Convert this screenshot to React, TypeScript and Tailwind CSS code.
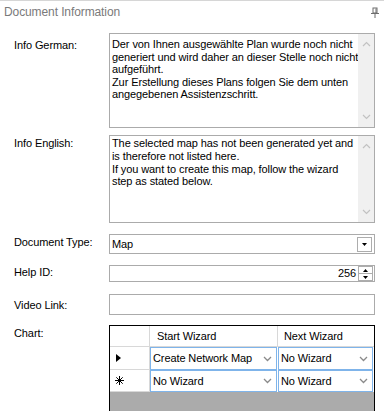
import React from "react";

const Chevron = () => (
  <svg width="9" height="6" viewBox="0 0 9 6" className="shrink-0">
    <polyline points="1,1 4.5,4.5 8,1" fill="none" stroke="#8a8a8a" strokeWidth="1.3" />
  </svg>
);

const ScrollStrip = () => (
  <div className="w-[16px] h-full shrink-0 bg-[#f0f0f0] flex flex-col items-center justify-between py-[7px]">
    <svg width="9" height="6" viewBox="0 0 9 6">
      <polyline points="1,5 4.5,1.5 8,5" fill="none" stroke="#c2c2c2" strokeWidth="1.2" />
    </svg>
    <svg width="9" height="6" viewBox="0 0 9 6">
      <polyline points="1,1 4.5,4.5 8,1" fill="none" stroke="#c2c2c2" strokeWidth="1.2" />
    </svg>
  </div>
);

const GridCombo = ({ text }: { text: string }) => (
  <div className="h-full w-full border border-[#7fb4ea] bg-white flex items-center justify-between pl-[2px] pr-[4px] text-black whitespace-nowrap">
    <span>{text}</span>
    <Chevron />
  </div>
);

export default function App() {
  return (
    <div className="w-[384px] h-[411px] bg-white border-t border-[#d6d6d6] overflow-hidden font-['Liberation_Sans',Arial,sans-serif] text-[11px] tracking-[-0.1px] leading-[13px] text-black">
      <div className="h-[22px] flex items-center justify-between pl-[4px] pr-[5px]">
        <span className="text-[12px] text-[#7a7a7a]">Document Information</span>
        <svg width="8" height="11" viewBox="0 0 8 11">
          <rect x="2" y="1" width="4" height="5" fill="none" stroke="#6d6d6d" strokeWidth="1" />
          <line x1="0" y1="6.5" x2="8" y2="6.5" stroke="#6d6d6d" strokeWidth="1" />
          <line x1="4" y1="7" x2="4" y2="11" stroke="#6d6d6d" strokeWidth="1" />
          <line x1="5" y1="1.5" x2="5" y2="6" stroke="#6d6d6d" strokeWidth="1" />
        </svg>
      </div>

      <div className="pl-[14px] mt-[10px] flex flex-col">
        {/* Info German */}
        <div className="flex">
          <div className="w-[95px] shrink-0 pt-[6px]">Info German:</div>
          <div className="w-[266px] h-[95px] shrink-0 border border-[#ababab] flex overflow-hidden">
            <div className="flex-1 pl-[2px] pt-[4px] leading-[12.6px] whitespace-nowrap overflow-hidden">
              Der von Ihnen ausgewählte Plan wurde noch nicht
              <br />
              generiert und wird daher an dieser Stelle noch nicht
              <br />
              aufgeführt.
              <br />
              Zur Erstellung dieses Plans folgen Sie dem unten
              <br />
              angegebenen Assistenzschritt.
            </div>
            <ScrollStrip />
          </div>
        </div>

        {/* Info English */}
        <div className="flex mt-[7px]">
          <div className="w-[95px] shrink-0 pt-[2px]">Info English:</div>
          <div className="w-[266px] h-[88px] shrink-0 border border-[#ababab] flex overflow-hidden">
            <div className="flex-1 pl-[2px] pt-[1px] leading-[12.8px] whitespace-nowrap overflow-hidden">
              The selected map has not been generated yet and
              <br />
              is therefore not listed here.
              <br />
              If you want to create this map, follow the wizard
              <br />
              step as stated below.
            </div>
            <ScrollStrip />
          </div>
        </div>

        {/* Document Type */}
        <div className="flex mt-[11px]">
          <div className="w-[95px] shrink-0 pt-[2px]">Document Type:</div>
          <div className="w-[266px] h-[20px] shrink-0 border border-[#ababab] flex items-center justify-between pl-[2px] pr-[2px]">
            <span>Map</span>
            <div className="w-[15px] h-[15px] border border-[#adadad] bg-white flex items-center justify-center">
              <svg width="5" height="3" viewBox="0 0 5 3">
                <polygon points="0,0 5,0 2.5,3" fill="#000" />
              </svg>
            </div>
          </div>
        </div>

        {/* Help ID */}
        <div className="flex mt-[11px]">
          <div className="w-[95px] shrink-0 pt-[1px]">Help ID:</div>
          <div className="w-[266px] h-[17px] shrink-0 border border-[#ababab] flex items-center justify-end pr-[1px]">
            <span className="mr-[2px]">256</span>
            <div className="flex flex-col w-[15px] h-[15px]">
              <div className="flex-1 border border-[#adadad] flex items-center justify-center">
                <svg width="5" height="3" viewBox="0 0 5 3">
                  <polygon points="0,3 5,3 2.5,0" fill="#000" />
                </svg>
              </div>
              <div className="flex-1 border border-t-0 border-[#adadad] flex items-center justify-center">
                <svg width="5" height="3" viewBox="0 0 5 3">
                  <polygon points="0,0 5,0 2.5,3" fill="#000" />
                </svg>
              </div>
            </div>
          </div>
        </div>

        {/* Video Link */}
        <div className="flex mt-[12px]">
          <div className="w-[95px] shrink-0 pt-[5px]">Video Link:</div>
          <div className="w-[266px] h-[21px] shrink-0 border border-[#ababab]" />
        </div>

        {/* Chart */}
        <div className="flex mt-[10px]">
          <div className="w-[95px] shrink-0 pt-[2px]">Chart:</div>
          <div className="w-[266px] h-[100px] shrink-0 border border-black border-b-0 bg-[#ababab] flex flex-col">
            <div className="grid grid-cols-[40px_128px_1fr] bg-white">
              {/* header */}
              <div className="h-[21px] border-r border-b border-[#d8d8d8]" />
              <div className="h-[21px] border-r border-b border-[#d8d8d8] flex items-center pl-[7px]">Start Wizard</div>
              <div className="h-[21px] border-b border-[#d8d8d8] flex items-center pl-[6px]">Next Wizard</div>
              {/* row 1 */}
              <div className="h-[23px] border-r border-b border-[#d8d8d8] flex items-center pl-[6px]">
                <svg width="5" height="8" viewBox="0 0 5 8">
                  <polygon points="0,0 5,4 0,8" fill="#000" />
                </svg>
              </div>
              <div className="h-[23px] pr-[1px]">
                <GridCombo text="Create Network Map" />
              </div>
              <div className="h-[23px] pr-[1px]">
                <GridCombo text="No Wizard" />
              </div>
              {/* row 2 */}
              <div className="h-[22px] border-r border-b border-[#d8d8d8] flex items-center pl-[5px]">
                <svg width="9" height="9" viewBox="0 0 9 9">
                  <line x1="4.5" y1="0" x2="4.5" y2="9" stroke="#000" strokeWidth="1" />
                  <line x1="0" y1="4.5" x2="9" y2="4.5" stroke="#000" strokeWidth="1" />
                  <line x1="1.3" y1="1.3" x2="7.7" y2="7.7" stroke="#000" strokeWidth="1" />
                  <line x1="7.7" y1="1.3" x2="1.3" y2="7.7" stroke="#000" strokeWidth="1" />
                </svg>
              </div>
              <div className="h-[22px] pr-[1px]">
                <GridCombo text="No Wizard" />
              </div>
              <div className="h-[22px] pr-[1px]">
                <GridCombo text="No Wizard" />
              </div>
            </div>
          </div>
        </div>
      </div>
    </div>
  );
}
